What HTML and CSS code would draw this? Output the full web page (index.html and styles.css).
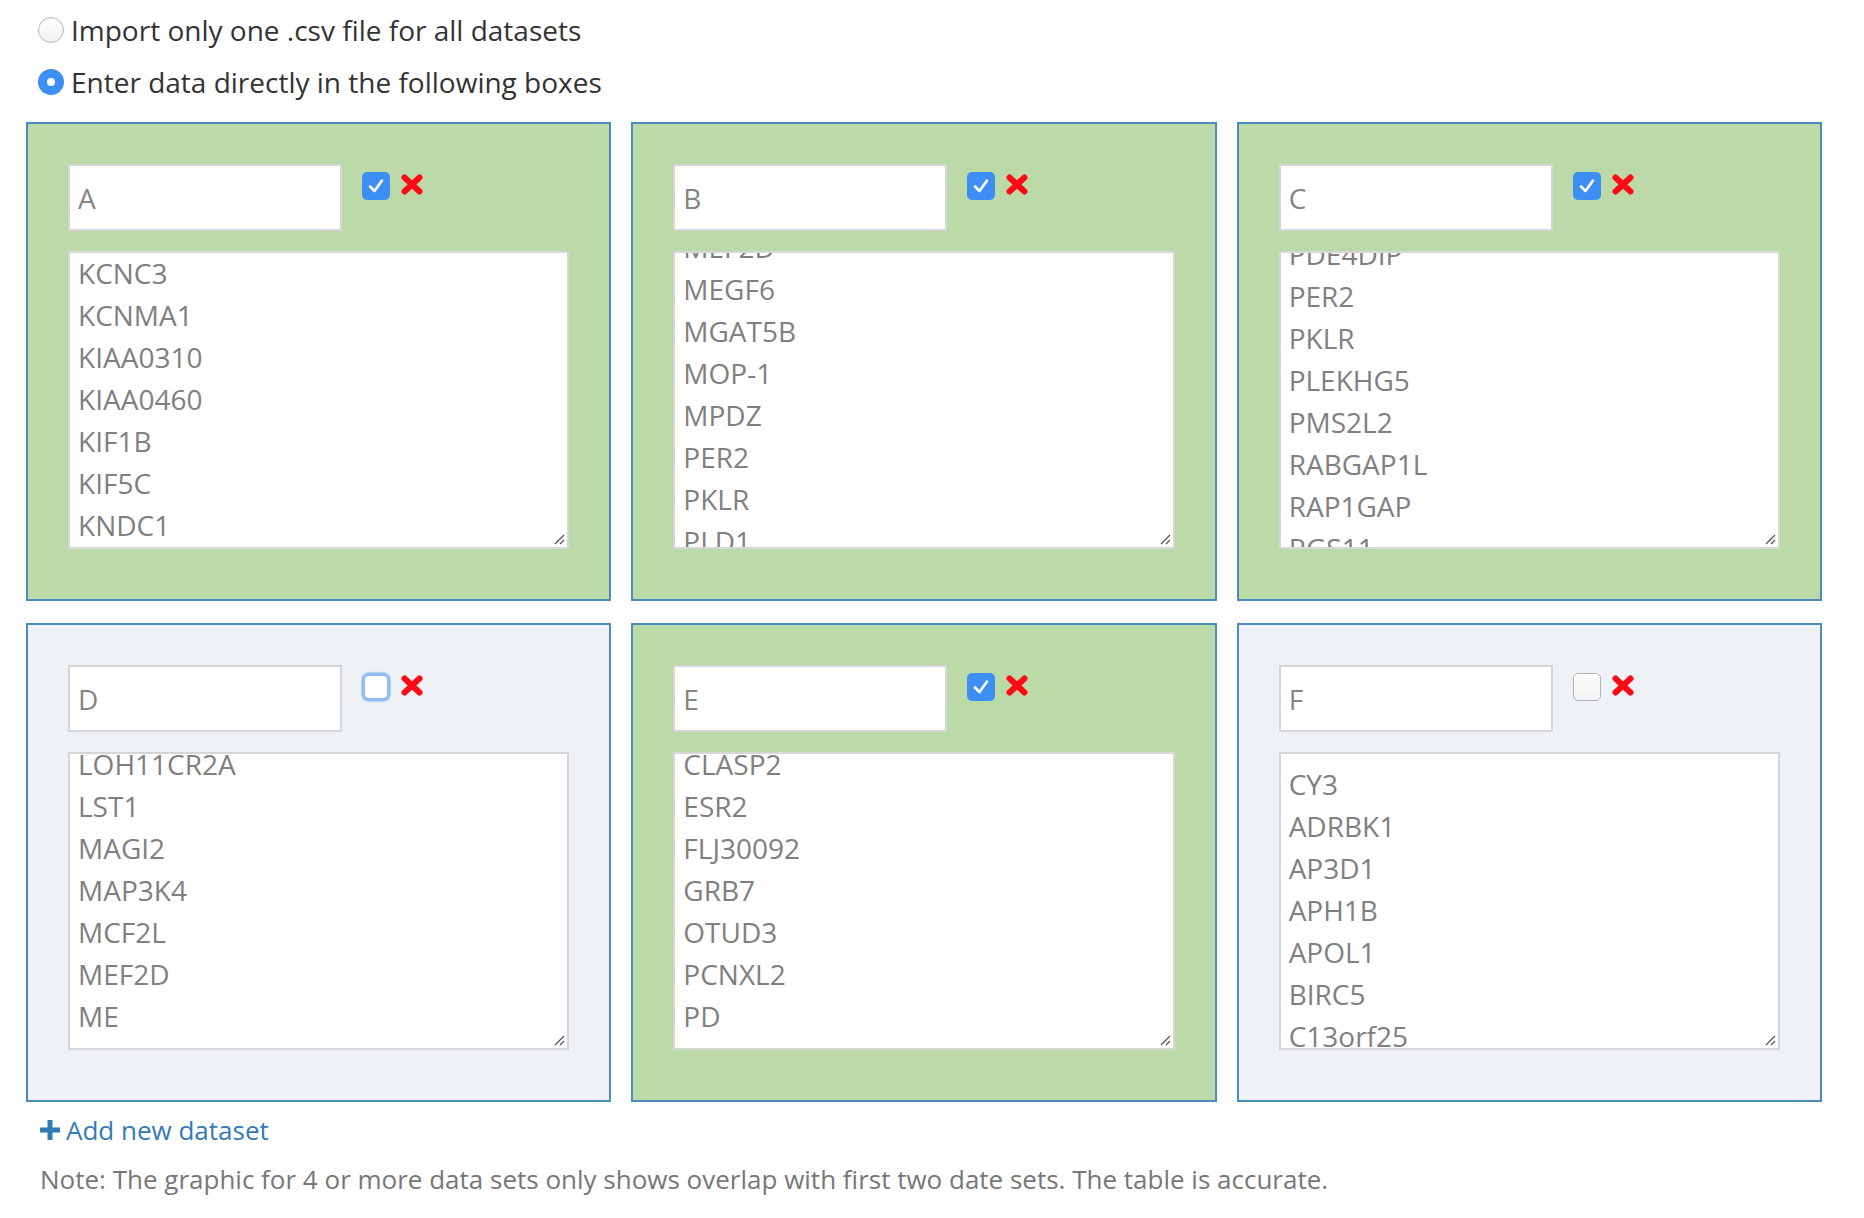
FILE: index.html
```html
<!DOCTYPE html>
<html lang="en">
<head>
<meta charset="utf-8">
<title>Datasets</title>
<link rel="stylesheet" href="styles.css">
</head>
<body>
<div class="page">
  <div class="radio-group">
    <label class="radio-row"><span class="radio"></span><span class="radio-label">Import only one .csv file for all datasets</span></label>
    <label class="radio-row"><span class="radio radio--on"></span><span class="radio-label">Enter data directly in the following boxes</span></label>
  </div>

  <div class="datasets">
    <div class="dataset dataset--on">
      <div class="dataset-head">
        <input class="name-input" type="text" value="A">
        <span class="check check--on"><svg viewBox="0 0 28 28" width="28" height="28"><path d="M8 14.5 L12.5 19 L20 8.5" fill="none" stroke="#fff" stroke-width="2.6" stroke-linecap="round" stroke-linejoin="round"/></svg></span>
        <span class="remove"><svg viewBox="0 0 24 23" width="24" height="23"><path d="M4.5 4.5 L19.5 18.5 M19.5 4.5 L4.5 18.5" fill="none" stroke="#ff0a14" stroke-width="6" stroke-linecap="round"/></svg></span>
      </div>
      <div class="genes">
        <div class="genes-list genes-list--top0">
          <div>KCNC3</div><div>KCNMA1</div><div>KIAA0310</div><div>KIAA0460</div><div>KIF1B</div><div>KIF5C</div><div>KNDC1</div>
        </div>
        <span class="grip"><svg viewBox="0 0 12 12" width="12" height="12"><path d="M11 2 L2 11 M11 7 L7 11" stroke="#555" stroke-width="1.3"/></svg></span>
      </div>
    </div>

    <div class="dataset dataset--on">
      <div class="dataset-head">
        <input class="name-input" type="text" value="B">
        <span class="check check--on"><svg viewBox="0 0 28 28" width="28" height="28"><path d="M8 14.5 L12.5 19 L20 8.5" fill="none" stroke="#fff" stroke-width="2.6" stroke-linecap="round" stroke-linejoin="round"/></svg></span>
        <span class="remove"><svg viewBox="0 0 24 23" width="24" height="23"><path d="M4.5 4.5 L19.5 18.5 M19.5 4.5 L4.5 18.5" fill="none" stroke="#ff0a14" stroke-width="6" stroke-linecap="round"/></svg></span>
      </div>
      <div class="genes">
        <div class="genes-list genes-list--b">
          <div>MEF2D</div><div>MEGF6</div><div>MGAT5B</div><div>MOP-1</div><div>MPDZ</div><div>PER2</div><div>PKLR</div><div>PLD1</div>
        </div>
        <span class="grip"><svg viewBox="0 0 12 12" width="12" height="12"><path d="M11 2 L2 11 M11 7 L7 11" stroke="#555" stroke-width="1.3"/></svg></span>
      </div>
    </div>

    <div class="dataset dataset--on">
      <div class="dataset-head">
        <input class="name-input" type="text" value="C">
        <span class="check check--on"><svg viewBox="0 0 28 28" width="28" height="28"><path d="M8 14.5 L12.5 19 L20 8.5" fill="none" stroke="#fff" stroke-width="2.6" stroke-linecap="round" stroke-linejoin="round"/></svg></span>
        <span class="remove"><svg viewBox="0 0 24 23" width="24" height="23"><path d="M4.5 4.5 L19.5 18.5 M19.5 4.5 L4.5 18.5" fill="none" stroke="#ff0a14" stroke-width="6" stroke-linecap="round"/></svg></span>
      </div>
      <div class="genes">
        <div class="genes-list genes-list--c">
          <div>PDE4DIP</div><div>PER2</div><div>PKLR</div><div>PLEKHG5</div><div>PMS2L2</div><div>RABGAP1L</div><div>RAP1GAP</div><div>RGS11</div>
        </div>
        <span class="grip"><svg viewBox="0 0 12 12" width="12" height="12"><path d="M11 2 L2 11 M11 7 L7 11" stroke="#555" stroke-width="1.3"/></svg></span>
      </div>
    </div>

    <div class="dataset">
      <div class="dataset-head">
        <input class="name-input" type="text" value="D">
        <span class="check check--focus"></span>
        <span class="remove"><svg viewBox="0 0 24 23" width="24" height="23"><path d="M4.5 4.5 L19.5 18.5 M19.5 4.5 L4.5 18.5" fill="none" stroke="#ff0a14" stroke-width="6" stroke-linecap="round"/></svg></span>
      </div>
      <div class="genes">
        <div class="genes-list genes-list--d">
          <div>LOH11CR2A</div><div>LST1</div><div>MAGI2</div><div>MAP3K4</div><div>MCF2L</div><div>MEF2D</div><div>ME</div>
        </div>
        <span class="grip"><svg viewBox="0 0 12 12" width="12" height="12"><path d="M11 2 L2 11 M11 7 L7 11" stroke="#555" stroke-width="1.3"/></svg></span>
      </div>
    </div>

    <div class="dataset dataset--on">
      <div class="dataset-head">
        <input class="name-input" type="text" value="E">
        <span class="check check--on"><svg viewBox="0 0 28 28" width="28" height="28"><path d="M8 14.5 L12.5 19 L20 8.5" fill="none" stroke="#fff" stroke-width="2.6" stroke-linecap="round" stroke-linejoin="round"/></svg></span>
        <span class="remove"><svg viewBox="0 0 24 23" width="24" height="23"><path d="M4.5 4.5 L19.5 18.5 M19.5 4.5 L4.5 18.5" fill="none" stroke="#ff0a14" stroke-width="6" stroke-linecap="round"/></svg></span>
      </div>
      <div class="genes">
        <div class="genes-list genes-list--d">
          <div>CLASP2</div><div>ESR2</div><div>FLJ30092</div><div>GRB7</div><div>OTUD3</div><div>PCNXL2</div><div>PD</div>
        </div>
        <span class="grip"><svg viewBox="0 0 12 12" width="12" height="12"><path d="M11 2 L2 11 M11 7 L7 11" stroke="#555" stroke-width="1.3"/></svg></span>
      </div>
    </div>

    <div class="dataset">
      <div class="dataset-head">
        <input class="name-input" type="text" value="F">
        <span class="check"></span>
        <span class="remove"><svg viewBox="0 0 24 23" width="24" height="23"><path d="M4.5 4.5 L19.5 18.5 M19.5 4.5 L4.5 18.5" fill="none" stroke="#ff0a14" stroke-width="6" stroke-linecap="round"/></svg></span>
      </div>
      <div class="genes">
        <div class="genes-list genes-list--f">
          <div>CY3</div><div>ADRBK1</div><div>AP3D1</div><div>APH1B</div><div>APOL1</div><div>BIRC5</div><div>C13orf25</div>
        </div>
        <span class="grip"><svg viewBox="0 0 12 12" width="12" height="12"><path d="M11 2 L2 11 M11 7 L7 11" stroke="#555" stroke-width="1.3"/></svg></span>
      </div>
    </div>
  </div>

  <a class="add-link" href="#"><svg class="plus" viewBox="0 0 20 20" width="20" height="20"><path d="M7.5 0 H12.5 V7.5 H20 V12.5 H12.5 V20 H7.5 V12.5 H0 V7.5 H7.5 Z" fill="#337ab7"/></svg>Add new dataset</a>
  <p class="note">Note: The graphic for 4 or more data sets only shows overlap with first two date sets. The table is accurate.</p>
</div>
</body>
</html>
```

FILE: styles.css
```css
* { box-sizing: border-box; }

html, body {
  margin: 0;
  padding: 0;
  background: #fff;
}

body {
  font-family: "Open Sans", "Liberation Sans", sans-serif;
  color: #333;
}

.page {
  padding: 4px 42px 0 26px;
}

.radio-group {
  display: flex;
  flex-direction: column;
  padding-left: 12px;
}

.radio-row {
  display: flex;
  align-items: center;
  height: 52px;
  font-size: 28px;
  color: #333;
}

.radio {
  width: 26px;
  height: 26px;
  border-radius: 50%;
  border: 1px solid #b9b9b9;
  background: linear-gradient(#ffffff, #f0f0f0);
  margin-right: 7px;
  flex: none;
  box-shadow: inset 0 1px 1px rgba(0,0,0,0.05);
}

.radio--on {
  border: none;
  background: #3d8ff5;
  position: relative;
}

.radio--on::after {
  content: "";
  position: absolute;
  left: 9px;
  top: 9px;
  width: 8px;
  height: 8px;
  border-radius: 50%;
  background: #fff;
}

.datasets {
  margin-top: 14px;
  display: grid;
  grid-template-columns: repeat(3, 1fr);
  column-gap: 20px;
  row-gap: 22px;
}

.dataset {
  height: 479px;
  border: 2px solid #4a8dbd;
  background: #eef2f7;
  padding: 40px;
}

.dataset--on {
  background: #bcdaa8;
}

.dataset-head {
  display: flex;
  align-items: flex-start;
  margin-bottom: 20px;
}

.name-input {
  width: 274px;
  height: 67px;
  border: 2px solid #d6d6d6;
  background: #fff;
  padding: 0 8px;
  font-family: "Open Sans", "Liberation Sans", sans-serif;
  font-size: 28px;
  color: #858585;
  outline: none;
  margin: 0;
}

.check {
  width: 28px;
  height: 28px;
  margin-left: 20px;
  margin-top: 8px;
  border-radius: 5px;
  border: 1px solid #b4b4b4;
  background: linear-gradient(#ffffff, #f2f2f2);
  flex: none;
  display: block;
}

.check svg { display: block; }

.check--on {
  border: none;
  background: #3d8ff5;
}

.check--focus {
  border: 3px solid #8fbdf2;
  background: #fff;
  border-radius: 7px;
  box-shadow: 0 0 1px 1px rgba(120, 170, 240, 0.5);
}

.remove {
  margin-left: 10px;
  margin-top: 9px;
  display: block;
  flex: none;
}

.remove svg { display: block; }

.genes {
  position: relative;
  height: 298px;
  border: 2px solid #d6d6d6;
  background: #fff;
  overflow: hidden;
}

.genes-list {
  padding: 0 8px;
  font-size: 28px;
  line-height: 42px;
  color: #808080;
}

.genes-list--top0 { margin-top: -1px; }
.genes-list--b { margin-top: -27px; }
.genes-list--c { margin-top: -20px; }
.genes-list--d { margin-top: -11px; }
.genes-list--f { margin-top: 9px; }

.grip {
  position: absolute;
  right: 2px;
  bottom: 2px;
  width: 12px;
  height: 12px;
}

.grip svg { display: block; }

.add-link {
  display: flex;
  align-items: center;
  margin-top: 10px;
  padding-left: 14px;
  height: 36px;
  font-size: 26px;
  color: #337ab7;
  text-decoration: none;
}

.plus {
  margin-right: 6px;
  flex: none;
}

.note {
  margin: 13px 0 0 0;
  padding-left: 14px;
  font-size: 26px;
  line-height: 36px;
  color: #777;
}
```
